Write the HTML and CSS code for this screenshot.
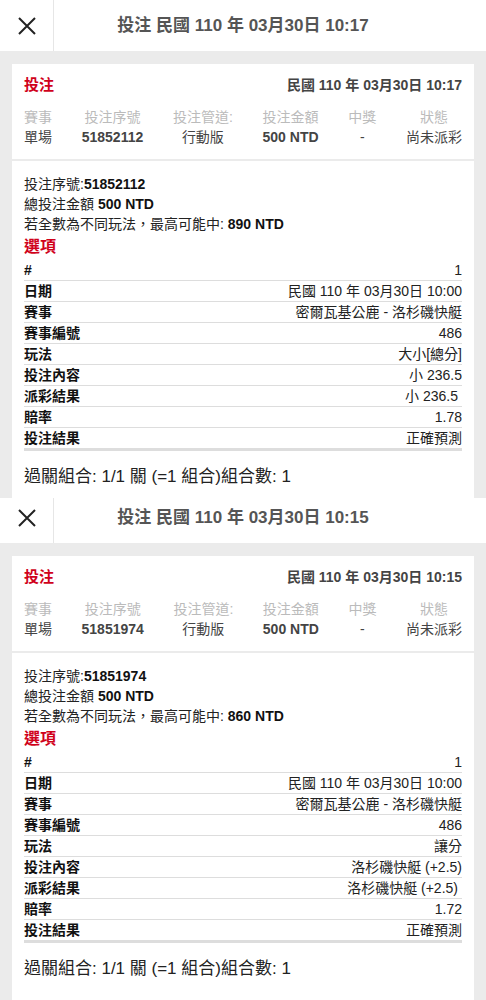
FILE: index.html
```html
<!DOCTYPE html>
<html>

<head>
    <meta charset="UTF-8">
    <title>投注紀錄</title>
    <link rel="stylesheet" href="styles.css">
</head>

<body>
    <!-- 第一筆 -->
    <section class="shot shot-first">
        <div class="shot-inner">
            <header class="top-bar">
                <div class="close">
                    <svg width="18" height="18" viewBox="0 0 18 18">
                        <path d="M1 1 L17 17 M17 1 L1 17" stroke="#222" stroke-width="2" fill="none" />
                    </svg>
                </div>
                <h1 class="top-title">投注 民國 110 年 03月30日 10:17</h1>
                <div></div>
            </header>
            <main class="content">
                <div class="card summary">
                    <div class="summary-head">
                        <span class="red-title">投注</span>
                        <span class="summary-date">民國 110 年 03月30日 10:17</span>
                    </div>
                    <ul class="summary-cols">
                        <li><span class="col-label">賽事</span><span class="col-value">單場</span></li>
                        <li><span class="col-label">投注序號</span><span class="col-value num">51852112</span></li>
                        <li><span class="col-label">投注管道:</span><span class="col-value">行動版</span></li>
                        <li><span class="col-label">投注金額</span><span class="col-value num">500 NTD</span></li>
                        <li><span class="col-label">中獎</span><span class="col-value">-</span></li>
                        <li><span class="col-label">狀態</span><span class="col-value">尚未派彩</span></li>
                    </ul>
                </div>
                <div class="card detail">
                    <p>投注序號:<b>51852112</b></p>
                    <p>總投注金額 <b>500 NTD</b></p>
                    <p>若全數為不同玩法，最高可能中: <b>890 NTD</b></p>
                    <h2 class="red-sub">選項</h2>
                    <ul class="bet-table">
                        <li><label>#</label><span>1</span></li>
                        <li><label>日期</label><span>民國 110 年 03月30日 10:00</span></li>
                        <li><label>賽事</label><span>密爾瓦基公鹿 - 洛杉磯快艇</span></li>
                        <li><label>賽事編號</label><span>486</span></li>
                        <li><label>玩法</label><span>大小[總分]</span></li>
                        <li><label>投注內容</label><span>小 236.5</span></li>
                        <li><label>派彩結果</label><span class="pad-end">小 236.5</span></li>
                        <li><label>賠率</label><span>1.78</span></li>
                        <li><label>投注結果</label><span>正確預測</span></li>
                    </ul>
                    <p class="combo">過關組合: 1/1 關 (=1 組合)組合數: 1</p>
                </div>
            </main>
        </div>
    </section>

    <!-- 第二筆 -->
    <section class="shot shot-second">
        <div class="shot-inner">
            <header class="top-bar">
                <div class="close">
                    <svg width="18" height="18" viewBox="0 0 18 18">
                        <path d="M1 1 L17 17 M17 1 L1 17" stroke="#222" stroke-width="2" fill="none" />
                    </svg>
                </div>
                <h1 class="top-title">投注 民國 110 年 03月30日 10:15</h1>
                <div></div>
            </header>
            <main class="content">
                <div class="card summary">
                    <div class="summary-head">
                        <span class="red-title">投注</span>
                        <span class="summary-date">民國 110 年 03月30日 10:15</span>
                    </div>
                    <ul class="summary-cols">
                        <li><span class="col-label">賽事</span><span class="col-value">單場</span></li>
                        <li><span class="col-label">投注序號</span><span class="col-value num">51851974</span></li>
                        <li><span class="col-label">投注管道:</span><span class="col-value">行動版</span></li>
                        <li><span class="col-label">投注金額</span><span class="col-value num">500 NTD</span></li>
                        <li><span class="col-label">中獎</span><span class="col-value">-</span></li>
                        <li><span class="col-label">狀態</span><span class="col-value">尚未派彩</span></li>
                    </ul>
                </div>
                <div class="card detail">
                    <p>投注序號:<b>51851974</b></p>
                    <p>總投注金額 <b>500 NTD</b></p>
                    <p>若全數為不同玩法，最高可能中: <b>860 NTD</b></p>
                    <h2 class="red-sub">選項</h2>
                    <ul class="bet-table">
                        <li><label>#</label><span>1</span></li>
                        <li><label>日期</label><span>民國 110 年 03月30日 10:00</span></li>
                        <li><label>賽事</label><span>密爾瓦基公鹿 - 洛杉磯快艇</span></li>
                        <li><label>賽事編號</label><span>486</span></li>
                        <li><label>玩法</label><span>讓分</span></li>
                        <li><label>投注內容</label><span>洛杉磯快艇 (+2.5)</span></li>
                        <li><label>派彩結果</label><span class="pad-end">洛杉磯快艇 (+2.5)</span></li>
                        <li><label>賠率</label><span>1.72</span></li>
                        <li><label>投注結果</label><span>正確預測</span></li>
                    </ul>
                    <p class="combo">過關組合: 1/1 關 (=1 組合)組合數: 1</p>
                </div>
            </main>
        </div>
    </section>
</body>

</html>
```

FILE: styles.css
```css
body {
    margin: 0;
    background: #ebebeb;
    font-family: "Liberation Sans", "Noto Sans CJK TC", sans-serif;
    color: #222;
    font-size: 14px;
}

.shot {
    overflow: hidden;
    background: #ebebeb;
}

.shot-first {
    height: 498px;
}

.shot-second {
    height: 502px;
}

/* 두번째 화면은 위쪽이 잘려 있음 */
.shot-second .shot-inner {
    margin-top: -6px;
}

.top-bar {
    display: grid;
    grid-template-columns: 54px 1fr 54px;
    height: 51px;
    background: #fff;
}

.close {
    display: flex;
    align-items: center;
    justify-content: center;
    border-right: 1px solid #e6e6e6;
}

.top-title {
    margin: 0;
    font-size: 17px;
    font-weight: bold;
    color: #555;
    line-height: 51px;
    text-align: center;
    white-space: nowrap;
}

.content {
    padding: 13px 12px 0;
}

.card {
    background: #fff;
}

.summary {
    padding: 11px 12px 12px;
}

.summary-head {
    display: flex;
    justify-content: space-between;
    line-height: 20px;
    margin-bottom: 12px;
}

.red-title {
    color: #d0021b;
    font-size: 15px;
    font-weight: bold;
}

.summary-date {
    color: #444;
    font-weight: bold;
}

ul {
    list-style-type: none;
    margin: 0;
    padding: 0;
}

.summary-cols {
    display: flex;
    justify-content: space-between;
}

.summary-cols li {
    display: flex;
    flex-direction: column;
    align-items: center;
    line-height: 20px;
    white-space: nowrap;
}

.col-label {
    color: #bbb;
}

.col-value {
    color: #444;
}

.col-value.num {
    font-weight: bold;
}

.detail {
    margin-top: 2px;
    padding: 13px 12px 40px;
}

.detail p {
    margin: 0;
    line-height: 20px;
}

.detail b {
    color: #111;
}

.red-sub {
    margin: 0;
    color: #d0021b;
    font-size: 16px;
    line-height: 26px;
}

.bet-table li {
    display: flex;
    justify-content: space-between;
    line-height: 20px;
    border-bottom: 1px solid #ddd;
}

.bet-table li:last-child {
    border-bottom: 3px solid #ddd;
}

.bet-table label {
    font-weight: bold;
    color: #111;
}

.bet-table .pad-end {
    padding-right: 4px;
}

.detail .combo {
    margin-top: 14px;
    font-size: 17px;
    line-height: 24px;
}
```
